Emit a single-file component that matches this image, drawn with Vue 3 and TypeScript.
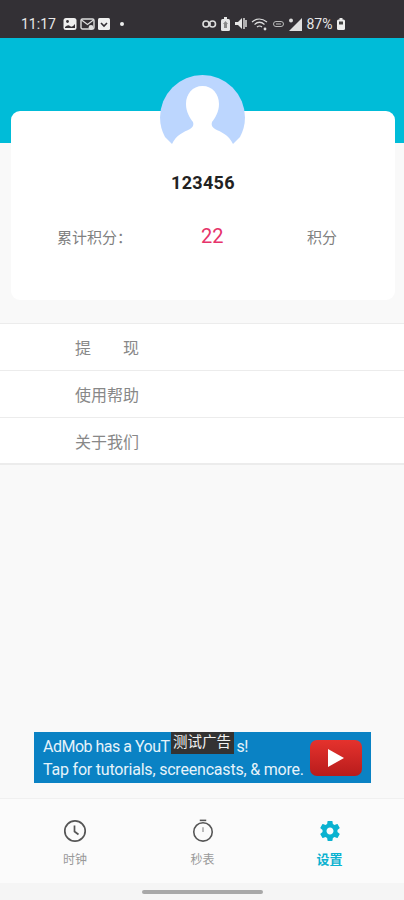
<script setup lang="ts">
interface NavItem { label: string; active?: boolean; icon: 'clock' | 'watch' | 'gear' }
const menu: string[] = ['提　　现', '使用帮助', '关于我们']
const nav: NavItem[] = [
  { label: '时钟', icon: 'clock' },
  { label: '秒表', icon: 'watch' },
  { label: '设置', icon: 'gear', active: true },
]
</script>

<template>
  <div class="page">
    <div class="status">
      <div class="status-left">
        <span class="time">11:17</span>
        <svg width="14" height="14" viewBox="0 0 14 14"><rect x="0.5" y="1" width="13" height="12" rx="2.5" fill="#eee"/><path d="M2 10 Q5 7 7 9 T12 7 V11 H2Z" fill="#333035"/><circle cx="4.5" cy="4.5" r="1.4" fill="#333035"/></svg>
        <svg width="15" height="14" viewBox="0 0 15 14"><rect x="1" y="2" width="13" height="10" rx="1.5" fill="none" stroke="#ddd" stroke-width="1.4"/><path d="M1.5 3 7.5 7.5 13.5 3" fill="none" stroke="#ddd" stroke-width="1.2"/><circle cx="11" cy="10.5" r="2.4" fill="#ddd"/></svg>
        <svg width="12" height="14" viewBox="0 0 12 14"><rect x="0" y="1" width="12" height="12" rx="1.5" fill="#f0f0f0"/><path d="M3 6 6 9 9 6" fill="none" stroke="#333035" stroke-width="1.6"/></svg>
        <span class="dot"></span>
      </div>
      <div class="status-right">
        <svg width="15" height="10" viewBox="0 0 15 10"><circle cx="4" cy="5" r="3" fill="none" stroke="#ddd" stroke-width="1.6"/><circle cx="10.5" cy="5" r="3" fill="none" stroke="#ddd" stroke-width="1.6"/><path d="M7 5h2" stroke="#ddd" stroke-width="1.6"/></svg>
        <svg width="9" height="14" viewBox="0 0 9 14"><rect x="0" y="2" width="9" height="12" rx="1.5" fill="#e6e6e6"/><rect x="3" y="0" width="3" height="2" fill="#e6e6e6"/><path d="M4.5 4 7 7H6v4H3V7H2Z" fill="#8a8a8a"/></svg>
        <svg width="12" height="13" viewBox="0 0 12 13"><path d="M0 5h3l4-4v11L3 8H0Z" fill="#e6e6e6"/><path d="M9 1v11M11 3v7" stroke="#e6e6e6" stroke-width="1.4"/></svg>
        <svg width="17" height="14" viewBox="0 0 17 14"><path d="M1 5Q8-1 16 5M3.5 7.5Q8.5 3 13.5 7.5M6 10Q8.5 8 11 10" fill="none" stroke="#ddd" stroke-width="1.2"/><circle cx="14" cy="12" r="1.4" fill="#ddd"/></svg>
        <svg width="11" height="8" viewBox="0 0 11 8"><rect x="0.5" y="1.5" width="10" height="5" rx="2.5" fill="none" stroke="#bbb"/><path d="M3 4h5" stroke="#bbb"/></svg>
        <svg width="14" height="14" viewBox="0 0 14 14"><path d="M14 1V14H1Z" fill="#e0e0e0"/><circle cx="3" cy="3.5" r="2" fill="#ddd"/></svg>
        <span class="pct">87%</span>
        <svg width="8" height="12" viewBox="0 0 8 12"><rect x="0" y="1.5" width="8" height="10.5" rx="1.5" fill="#eee"/><rect x="2.5" y="0" width="3" height="2" fill="#eee"/><rect x="2" y="3.5" width="4" height="3" fill="#444"/></svg>
      </div>
    </div>

    <div class="hero"></div>

    <section class="card">
      <div class="avatar">
        <svg width="85" height="69" viewBox="0 0 85 69">
          <path d="M0 42.5A42.5 42.5 0 0 1 85 42.5A42.5 42.5 0 0 1 80 62L73 69H12L5 62A42.5 42.5 0 0 1 0 42.5Z" fill="#bcd6fe"/>
          <path d="M42.5 11C32.5 11 26 19 26 29C26 37 30 43 33 47C34 50 33 52 30 54C24 57 16 60 12 69H73C69 60 61 57 55 54C52 52 51 50 52 47C55 43 59 37 59 29C59 19 52.5 11 42.5 11Z" fill="#fff"/>
        </svg>
      </div>
      <div class="user">123456</div>
      <div class="score">
        <span class="score-label">累计积分：</span>
        <span class="score-value">22</span>
        <span class="score-unit">积分</span>
      </div>
    </section>

    <ul class="menu">
      <li v-for="item in menu" :key="item" class="menu-row">{{ item }}</li>
    </ul>

    <div class="ad">
      <div class="ad-text">
        <div class="ad-line">
          <span>AdMob has a YouT</span>
          <span class="ad-tag">测试广告</span>
          <span>s!</span>
        </div>
        <div>Tap for tutorials, screencasts, &amp; more.</div>
      </div>
      <div class="yt"><span class="yt-play"></span></div>
    </div>

    <nav class="nav">
      <div v-for="n in nav" :key="n.label" class="nav-item" :class="{ active: n.active }">
        <svg v-if="n.icon === 'clock'" width="24" height="24" viewBox="0 0 24 24" fill="none" stroke="#555" stroke-width="1.7"><circle cx="12" cy="12" r="10.2"/><path d="M11.5 6.5V12.5L15.5 15.5"/></svg>
        <svg v-else-if="n.icon === 'watch'" width="24" height="26" viewBox="0 0 24 26" fill="none" stroke="#555" stroke-width="1.7"><path d="M8.5 1.5h7"/><circle cx="12" cy="14" r="10"/><path d="M12 9v5" stroke="#aaa"/></svg>
        <svg v-else width="24" height="24" viewBox="0 0 24 24" fill="#0bb2d0"><path d="M19.43 12.98c.04-.32.07-.64.07-.98s-.03-.66-.07-.98l2.11-1.65c.19-.15.24-.42.12-.64l-2-3.46c-.12-.22-.39-.3-.61-.22l-2.49 1c-.52-.4-1.08-.73-1.69-.98l-.38-2.65C14.46 2.18 14.25 2 14 2h-4c-.25 0-.46.18-.49.42l-.38 2.65c-.61.25-1.17.59-1.69.98l-2.49-1c-.23-.09-.49 0-.61.22l-2 3.46c-.13.22-.07.49.12.64l2.11 1.65c-.04.32-.07.65-.07.98s.03.66.07.98l-2.11 1.65c-.19.15-.24.42-.12.64l2 3.46c.12.22.39.3.61.22l2.49-1c.52.4 1.08.73 1.69.98l.38 2.65c.03.24.24.42.49.42h4c.25 0 .46-.18.49-.42l.38-2.65c.61-.25 1.17-.59 1.69-.98l2.49 1c.23.09.49 0 .61-.22l2-3.46c.12-.22.07-.49-.12-.64l-2.11-1.65zM12 15.5c-1.93 0-3.5-1.57-3.5-3.5s1.57-3.5 3.5-3.5 3.5 1.57 3.5 3.5-1.57 3.5-3.5 3.5z"/></svg>
        <span class="nav-label">{{ n.label }}</span>
      </div>
    </nav>

    <div class="home"><span class="home-bar"></span></div>
  </div>
</template>

<style>
html, body { margin: 0; padding: 0; background: #f9f9f9; }
</style>

<style scoped>
.page {
  width: 404px;
  height: 900px;
  overflow: hidden;
  display: flex;
  flex-direction: column;
  background: #f9f9f9;
  font-family: Roboto, "Noto Sans CJK SC", sans-serif;
}
.status {
  height: 38px;
  flex: none;
  background: #333035;
  display: flex;
  align-items: center;
  justify-content: space-between;
  padding: 9px 59px 0 21px;
  box-sizing: border-box;
  color: #e8e8e8;
  font-size: 14px;
}
.status-left { display: flex; align-items: center; gap: 3px; }
.status-right { display: flex; align-items: center; gap: 4.5px; }
.time { width: 39px; }
.dot { width: 4px; height: 4px; border-radius: 50%; background: #eee; margin-left: 7px; }
.hero { height: 105px; flex: none; background: #00bcd8; }
.card {
  position: relative;
  margin: -32px 9px 0 11px;
  height: 189px;
  flex: none;
  background: #fff;
  border-radius: 9px;
  box-sizing: border-box;
  padding-top: 60px;
  display: flex;
  flex-direction: column;
  align-items: center;
}
.avatar { position: absolute; top: -36px; left: 149px; width: 85px; height: 69px; }
.avatar svg { display: block; }
.user { font-size: 18px; font-weight: 700; color: #222; line-height: 24px; letter-spacing: 0.3px; }
.score {
  width: 100%;
  box-sizing: border-box;
  margin-top: 31px;
  padding: 0 58px 0 46px;
  display: grid;
  grid-template-columns: 144px 106px 1fr;
  align-items: center;
  color: #808080;
  font-size: 15px;
  line-height: 24px;
}
.score-value { color: #e6336a; font-size: 20px; margin-top: -5px; }
.menu { list-style: none; margin: 23px 0 0; padding: 0; background: #fff; border-bottom: 2px solid #ececec; }
.menu-row {
  height: 46px;
  box-sizing: border-box;
  border-top: 1px solid #ececec;
  padding-left: 75px;
  margin-bottom: 1px;
  line-height: 50px;
  font-size: 16px;
  color: #888;
}
.menu-row:last-child { margin-bottom: 0; }
.ad {
  margin: auto 33px 0 34px;
  height: 51px;
  flex: none;
  background: #0a82c4;
  display: flex;
  justify-content: space-between;
  padding: 0 9px;
  box-sizing: border-box;
  color: #e6f3fa;
}
.ad-text { font-size: 16px; line-height: 23px; white-space: nowrap; letter-spacing: -0.2px; }
.ad-line { display: flex; align-items: flex-start; padding-top: 3px; letter-spacing: -0.5px; }
.yt {
  width: 52px;
  height: 36px;
  margin-top: 8px;
  border-radius: 7px;
  background: linear-gradient(#e5322d, #b81c1c);
  display: flex;
  align-items: center;
  justify-content: center;
}
.yt-play { width: 0; height: 0; border-left: 16px solid #fff; border-top: 9px solid transparent; border-bottom: 9px solid transparent; }
.ad-tag {
  width: 63px;
  height: 22px;
  margin: -3px 3px 0 1px;
  background: #333;
  color: #f2f2f2;
  font-size: 14.5px;
  line-height: 22px;
  letter-spacing: 0;
  text-align: center;
  white-space: nowrap;
}
.nav {
  margin-top: 15px;
  height: 85px;
  flex: none;
  border-top: 1px solid #f0f0f0;
  background: #fbfbfb;
  display: grid;
  grid-template-columns: 150px 105px 149px;
  box-sizing: border-box;
}
.nav-item { display: flex; flex-direction: column; align-items: center; height: 62px; padding-top: 20px; position: relative; }
.nav-item svg { display: block; height: 24px; }
.nav-label { position: absolute; top: 53px; font-size: 12px; line-height: 16px; color: #999; }
.nav-item.active .nav-label { color: #0bb2d0; font-size: 13px; font-weight: 700; }
.home { height: 17px; flex: none; background: #f5f5f5; display: flex; justify-content: center; }
.home-bar { width: 121px; height: 4px; border-radius: 2px; background: #a8a8a8; margin-top: 7px; }
</style>
